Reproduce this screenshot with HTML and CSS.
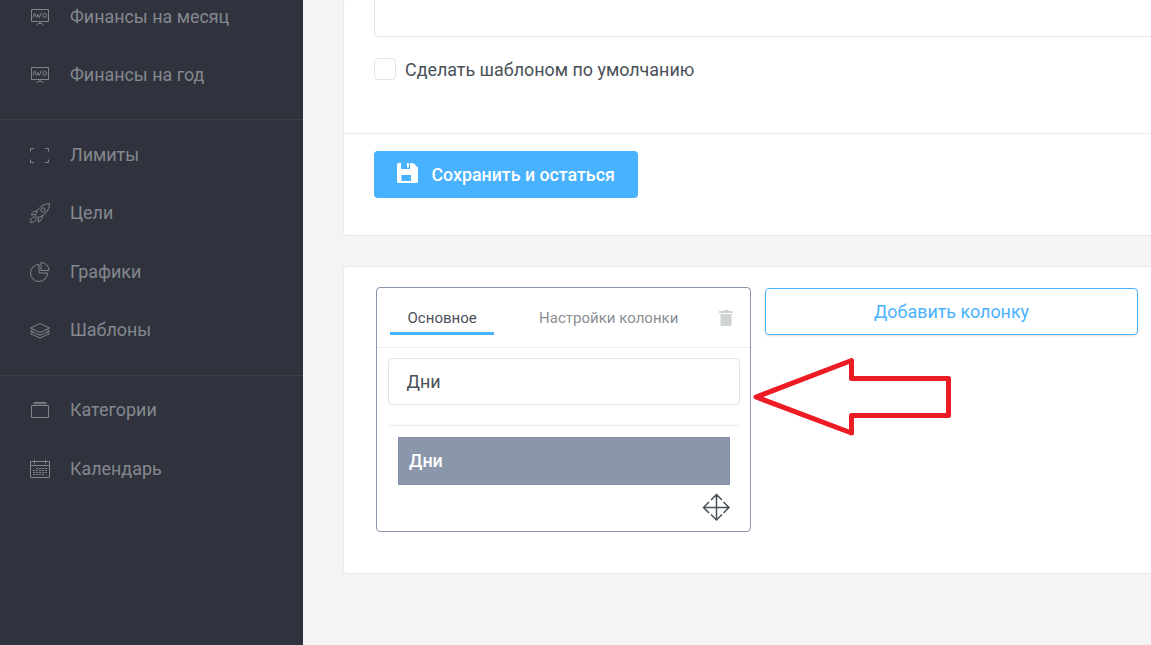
FILE: index.html
```html
<!DOCTYPE html>
<html lang="ru">
<head>
<meta charset="utf-8">
<title>Шаблоны</title>
<link rel="stylesheet" href="styles.css">
</head>
<body>
<div class="app">
  <nav class="sidebar">
    <div class="group">
      <a class="item"><svg class="icon" viewBox="0 0 20 20"><path d="M1.500 2.500h17v12h-17zM10 14.500v2M6.500 18l2-1.500h3l2 1.500M3 10.500l1.500-4.500 2 4.500 1.500-3 1.200 3L11.700 5.500"/><circle cx="14.800" cy="8.500" r="1.900"/></svg><span>Финансы на месяц</span></a>
      <a class="item"><svg class="icon" viewBox="0 0 20 20"><path d="M1.500 2.500h17v12h-17zM10 14.500v2M6.500 18l2-1.500h3l2 1.500M3 10.500l1.500-4.500 2 4.500 1.500-3 1.200 3L11.700 5.500"/><circle cx="14.800" cy="8.500" r="1.900"/></svg><span>Финансы на год</span></a>
    </div>
    <div class="group">
      <a class="item"><svg class="icon" viewBox="0 0 20 20"><path d="M.5 6.500v-3h3.500M15 3.500h3.500v3M18.500 14.500v3H15M4 17.500H.5v-3"/></svg><span>Лимиты</span></a>
      <a class="item"><svg class="icon" viewBox="0 0 20 20"><path d="M5.500 12.500C7 6 12 1 19.500.5 19.500 8 14 13 7.500 14.500zM7 8C4 8 2 9.500 1.500 12l4-.5M12.500 12.500c0 3-1.500 5.500-4.500 6.500l.5-4.500M.5 19.500c0-3 1-5.500 3-5.500s3 1 2.500 2.500-2.500 3-5.500 3z"/><circle cx="13" cy="7" r="2.200"/></svg><span>Цели</span></a>
      <a class="item"><svg class="icon" viewBox="0 0 20 20"><path d="M9 2.500a8.500 8.500 0 1 0 8.500 8.500H9zM11 .5v8h8a8 8 0 0 0-8-8z"/></svg><span>Графики</span></a>
      <a class="item"><svg class="icon" viewBox="0 0 20 20"><path d="M10 3.500l9.500 4.500-9.500 4.500L.5 8zM3 9.700L.5 11l9.500 4.300 9.500-4.300L17 9.700M3 12.500l-2.500 1.200L10 18l9.500-4.300-2.500-1.200"/></svg><span>Шаблоны</span></a>
    </div>
    <div class="group">
      <a class="item"><svg class="icon" viewBox="0 0 20 20"><path d="M1.500 5.500h17v12h-17zM4 2.500h12M3 3.800h14"/></svg><span>Категории</span></a>
      <a class="item"><svg class="icon" viewBox="0 0 20 20"><path d="M.5 2.500h19v16H.5zM.5 6.500h19M4.500.500v4M15.500.500v4"/><path stroke-dasharray="2 1" d="M6 9.500h11M3 11.500h14M3 13.500h14M3 15.500h11"/></svg><span>Календарь</span></a>
    </div>
  </nav>
  <main class="main">
    <section class="card form-card">
      <div class="form-body">
        <div class="textarea"></div>
        <label class="check"><span class="box"></span><span>Сделать шаблоном по умолчанию</span></label>
      </div>
      <div class="form-footer">
        <button class="save"><svg class="disk" viewBox="0 0 21 20"><path fill-rule="evenodd" d="M1.500 0H4v5.500Q4 6 4.500 6h8q.5 0 .5-.5V0l3.500.200L21 4.500v14q0 1.500-1.500 1.500h-18Q0 20 0 18.500v-17Q0 0 1.500 0zM4.500 12v6H14v-6zM10 0h2v4.500h-2z"/></svg><span>Сохранить и остаться</span></button>
      </div>
    </section>
    <section class="card columns-card">
      <div class="column">
        <div class="tabs">
          <span class="tab active">Основное</span>
          <span class="tab">Настройки колонки</span>
          <svg class="trash" viewBox="0 0 14 16"><path d="M0 1h4l1-1h4l1 1h4v2H0zM1.500 4h11v10.500Q12.500 16 11 16H3q-1.500 0-1.500-1.500z"/></svg>
        </div>
        <div class="column-body">
          <div class="input">Дни</div>
          <div class="entry-area">
            <div class="entry">Дни</div>
            <svg class="move" viewBox="0 0 28 28"><path d="M14.500 1.500v25M1.500 14.500h25.500M9 7l5.500-5.500L20 7M9 21.500l5.500 5.500L20 21.500M7 9l-5.500 5.500L7 20M21.500 9l5.500 5.500L21.500 20"/></svg>
          </div>
        </div>
      </div>
      <button class="add">Добавить колонку</button>
    </section>
  </main>
  <svg class="arrow" viewBox="0 0 200 80"><path d="M6 42L101.500 5.500v18h97v37h-97v17.500z"/></svg>
</div>
</body>
</html>
```

FILE: styles.css
```css
* { box-sizing: border-box; }
body {
  margin: 0;
  font-family: Roboto, "Noto Sans", sans-serif;
  font-size: 17.9px;
  color: #495057;
}
.app {
  position: relative;
  display: flex;
  width: 1151px;
  height: 645px;
  overflow: hidden;
  background: #f4f4f4;
}
.sidebar {
  flex: 0 0 303px;
  background: #30333d;
  color: #84888f;
  overflow: hidden;
}
.group {
  padding: 4.900px 0 15.700px;
  border-bottom: 1px solid #3d4149;
}
.group:first-child {
  margin-top: -17.600px;
  padding-bottom: 15.300px;
}
.group:last-child { border-bottom: 0; }
.item {
  display: flex;
  align-items: center;
  gap: 20px;
  height: 58.400px;
  padding-left: 30px;
}
.group:last-child .item { height: 58.900px; }
.icon {
  width: 20px;
  height: 21px;
  padding-top: 1px;
  fill: none;
  stroke: #7f838b;
  stroke-width: 1;
}
.main {
  flex: 0 0 900px;
  padding-left: 40px;
}
.card {
  background: #fff;
  border: 1px solid #e8e8e8;
  border-radius: 4px;
}
.form-card {
  height: 237px;
  margin-top: -1px;
  border-top: 0;
}
.form-body {
  height: 135px;
  padding: 0 30px;
  border-bottom: 1px solid #ececec;
}
.textarea {
  height: 38px;
  border: 1px solid #e4e4e4;
  border-top: 0;
  border-radius: 0 0 4px 4px;
}
.check {
  display: flex;
  align-items: center;
  gap: 9px;
  height: 22px;
  margin-top: 21px;
}
.box {
  width: 22px;
  height: 22px;
  border: 1px solid #e4e4e4;
  border-radius: 4px;
}
.form-footer { padding: 17px 30px; }
button {
  font: inherit;
  margin: 0;
}
.save {
  display: flex;
  align-items: center;
  gap: 13.500px;
  width: 264px;
  height: 47px;
  padding: 0 0 0 23px;
  border: 0;
  border-radius: 4px;
  background: #49b2ff;
  color: #fff;
  font-size: 17.800px;
  font-weight: 500;
  white-space: nowrap;
}
.disk {
  flex: none;
  width: 21px;
  height: 20px;
  margin-bottom: 3px;
  fill: #fff;
}
.columns-card {
  display: flex;
  align-items: flex-start;
  gap: 14px;
  height: 308px;
  margin-top: 30px;
  padding: 20px 32px;
}
.column {
  width: 375px;
  height: 245px;
  border: 1px solid #8995a9;
  border-radius: 4px;
}
.tabs {
  display: flex;
  align-items: center;
  height: 60px;
  padding: 0 17px 0 13px;
  border-bottom: 1px solid #efefef;
  font-size: 15px;
  color: #8b8e93;
}
.tab {
  height: 34px;
  margin-top: 1px;
  padding: 0 17px;
  line-height: 35px;
  letter-spacing: 0.020px;
  white-space: nowrap;
}
.tab.active {
  width: 104px;
  margin-right: 28px;
  padding-left: 17.500px;
  color: #495057;
  border-bottom: 3px solid #49b2ff;
}
.trash {
  width: 14px;
  height: 16px;
  margin-left: auto;
  fill: #d0d3d4;
}
.column-body { padding: 10px 10px 0 11px; }
.input {
  height: 47px;
  padding-left: 17.500px;
  border: 1px solid #e4e4e4;
  border-radius: 4px;
  line-height: 46px;
}
.entry-area {
  display: flex;
  flex-direction: column;
  align-items: flex-end;
  gap: 8px;
  margin-top: 20px;
  padding: 11px 10px 0;
  border-top: 1px solid #ececec;
}
.entry {
  align-self: stretch;
  height: 48px;
  padding-left: 10px;
  border: 1px solid #8490a5;
  background: #8a96aa;
  color: #fff;
  font-weight: 500;
  line-height: 46px;
}
.move {
  width: 28px;
  height: 28px;
  overflow: visible;
  fill: none;
  stroke: #495057;
  stroke-width: 1.500;
}
.add {
  width: 373px;
  height: 47px;
  margin-top: 1px;
  border: 1px solid #49b2ff;
  border-radius: 4px;
  background: #fff;
  box-shadow: 0 1px 2px rgba(0, 0, 0, 0.120);
  color: #49b2ff;
}
.arrow {
  position: absolute;
  left: 750px;
  top: 355px;
  width: 200px;
  height: 80px;
  overflow: visible;
  fill: none;
  stroke: #ed1c24;
  stroke-width: 5;
  stroke-linejoin: round;
}
```
